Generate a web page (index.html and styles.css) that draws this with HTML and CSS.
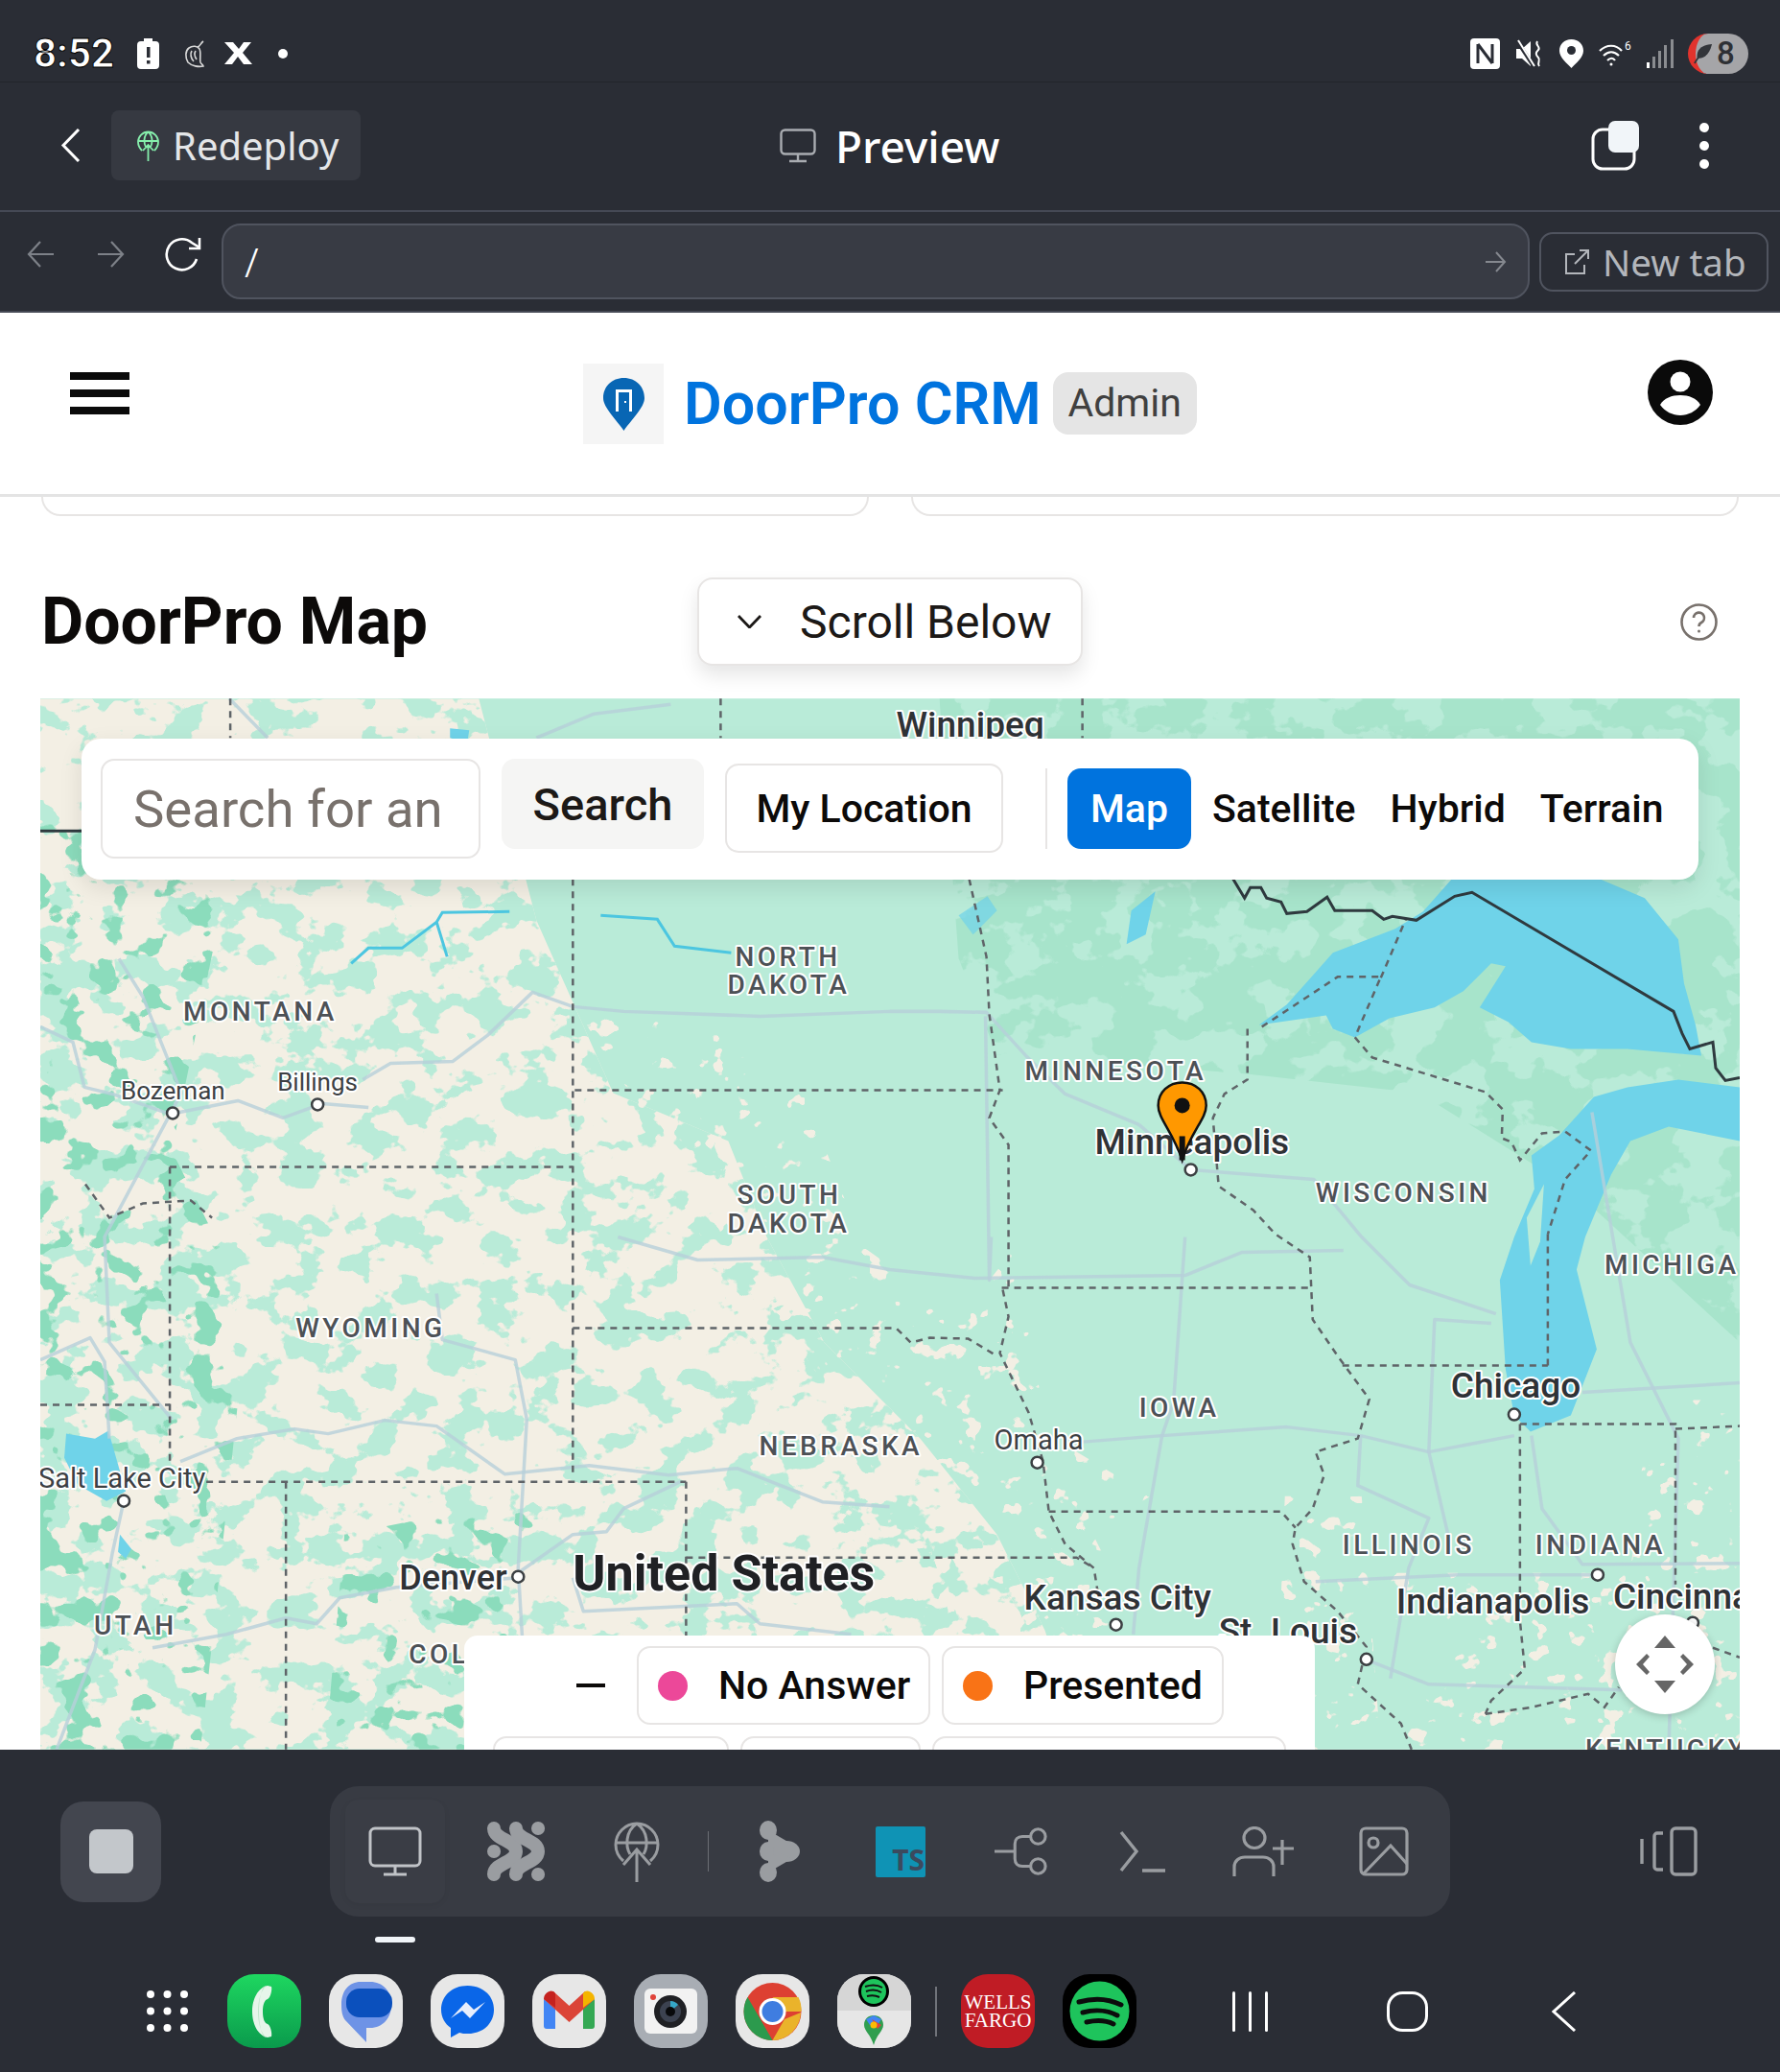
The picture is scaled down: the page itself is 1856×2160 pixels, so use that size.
FILE: index.html
```html
<!DOCTYPE html>
<html>
<head>
    <title>DoorPro CRM</title>
    <link rel="stylesheet" href="styles.css">
</head>
<body>
    <div class="status">
        <div class="status-left">
            <span class="clock">8:52</span>
            <svg class="ic-batt" viewBox="0 0 23 32"><path d="M7 0h9v3h3a4 4 0 0 1 4 4v21a4 4 0 0 1-4 4H4a4 4 0 0 1-4-4V7a4 4 0 0 1 4-4h3z" fill="#fff"/><rect x="10" y="9" width="3.5" height="11" fill="#2a2d35"/><rect x="10" y="23" width="3.5" height="3.5" fill="#2a2d35"/></svg>
            <svg class="ic-chili" viewBox="0 0 24 30" fill="none" stroke="#d8d8d8" stroke-width="1.6"><path d="M16 8c3-1 3-4 6-6M7 9c4-3 9-2 11 1 2 4 0 10 1 14 1 2 3 3 3 4-5 1-12 0-16-4C3 19 3 12 7 9z"/><path d="M10 12c-2 3-1 8 2 11M14 12c-2 3-1 6 1 9"/></svg>
            <svg class="ic-x" viewBox="0 0 31 23"><path d="M1 0h9l6 7 5-7h8l-9 11 10 12h-9l-6-8-6 8H1l10-12z" fill="#fff"/></svg>
            <span class="status-dot"></span>
        </div>
        <div class="status-right">
            <svg class="ic-nfc" viewBox="0 0 31 32"><rect width="31" height="32" rx="4" fill="#fff"/><path d="M8 6v20M23 6v20M8 6l15 20" fill="none" stroke="#2a2d35" stroke-width="3"/></svg>
            <svg class="ic-mute" viewBox="0 0 30 30"><path d="M1 10h6l9-8v26l-9-8H1z" fill="#fff"/><path d="M2 2l17 26" stroke="#2a2d35" stroke-width="4"/><path d="M3 1l17 27" stroke="#fff" stroke-width="2"/><path d="M23 2c-3 4 4 6 1 9s-3 5 0 8-2 5 1 9" fill="none" stroke="#fff" stroke-width="2"/></svg>
            <svg class="ic-loc" viewBox="0 0 25 30"><path d="M12.500 0C5 0 0 5 0 12c0 7 8 13 12.500 18C17 25 25 19 25 12 25 5 20 0 12.500 0z" fill="#fff"/><circle cx="12.500" cy="11.500" r="4.500" fill="#2a2d35"/></svg>
            <svg class="ic-wifi" viewBox="0 0 34 26" fill="none" stroke="#fff" stroke-width="2.200"><path d="M1 10c7-7 17-7 23 0M5 15c5-5 11-5 16 0M9 20c3-3 6-3 8 0"/><circle cx="13" cy="24" r="1.500" fill="#fff" stroke="none"/><text class="wifi-six" x="27" y="9">6</text></svg>
            <svg class="ic-signal" viewBox="0 0 28 30" fill="#8a8c90"><rect x="0" y="24" width="3" height="6" fill="#fff"/><rect x="6" y="18" width="3" height="12"/><rect x="12" y="12" width="3" height="18"/><rect x="18" y="6" width="3" height="24"/><rect x="25" y="0" width="3" height="30"/></svg>
            <div class="batt-pill"><svg class="leaf" viewBox="0 0 22 24"><path d="M21 1C9 2 3 7 4 17c8 1 14-4 17-16z" fill="#33353a"/><path d="M1 23c3-6 6-9 11-13" stroke="#33353a" stroke-width="2" fill="none"/></svg><span>8</span></div>
        </div>
    </div>

    <div class="toolbar">
        <svg class="ic-back" viewBox="0 0 21 35" fill="none" stroke="#fff" stroke-width="3"><path d="M19 1L3 17.500 19 34"/></svg>
        <div class="redeploy">
            <svg class="ic-deploy" viewBox="0 0 23 32" fill="none" stroke="#86efac" stroke-width="1.800"><path d="M5 21C2 18 1 15 1 12a10.500 10.500 0 0 1 21 0c0 3-1 6-4 9M1 11h21M11.500 1.500c-5 4-5 12-2 17M11.500 1.500c5 4 5 12 2 17M11.500 32V15M6 21l5.500-6 5.500 6"/></svg>
            <span>Redeploy</span>
        </div>
        <div class="preview-title">
            <svg class="ic-monitor" viewBox="0 0 38 36" fill="none" stroke="#a9acb1" stroke-width="2.400"><rect x="1.500" y="1.500" width="35" height="25" rx="4"/><path d="M19 27v7M10 34h18"/></svg>
            <span>Preview</span>
        </div>
        <svg class="ic-copy" viewBox="0 0 50 52"><rect x="2" y="9" width="43" height="41" rx="10" fill="none" stroke="#fff" stroke-width="3"/><rect x="18" y="0" width="32" height="33" rx="7" fill="#f1f5f9"/></svg>
        <svg class="ic-dots" viewBox="0 0 10 48" fill="#fff"><circle cx="5" cy="5" r="5"/><circle cx="5" cy="24" r="5"/><circle cx="5" cy="43" r="5"/></svg>
    </div>

    <div class="urlbar">
        <svg class="ic-nav" viewBox="0 0 28 28" fill="none" stroke="#7d8188" stroke-width="2.200"><path d="M28 14H2M14 1L2 14l12 13"/></svg>
        <svg class="ic-nav ic-forward" viewBox="0 0 28 28" fill="none" stroke="#7d8188" stroke-width="2.200"><path d="M0 14h26M14 1l12 13-12 13"/></svg>
        <svg class="ic-reload" viewBox="0 0 38 36" fill="none" stroke="#fff" stroke-width="2.600"><path d="M33 23a16 16 0 1 1-5-17l8 5"/><path d="M36 1v11H25"/></svg>
        <div class="url-input">
            <span class="url-slash">/</span>
            <svg class="ic-go" viewBox="0 0 22 22" fill="none" stroke="#85888f" stroke-width="2"><path d="M0 11h20M11 1l9 10-9 10"/></svg>
        </div>
        <div class="new-tab">
            <svg class="ic-ext" viewBox="0 0 26 26" fill="none" stroke="#b3b6bb" stroke-width="2"><path d="M11 5H2v20h19v-9M11 15L25 1M16 1h9v9"/></svg>
            <span>New tab</span>
        </div>
    </div>

    <div class="app">
        <header class="app-header">
            <div class="burger"><i></i><i></i><i></i></div>
            <div class="brand">
                <div class="logo-box">
                    <svg class="logo-pin" viewBox="0 0 43 55"><path d="M21.500 0C9 0 0 9 0 21c0 10 15 24 21.500 34C28 45 43 31 43 21 43 9 34 0 21.500 0z" fill="#0866b4"/><path d="M13 35V12h17v23h-3V15H16v20z" fill="#fff"/><rect x="22" y="24" width="2" height="2" fill="#fff"/></svg>
                </div>
                <span class="brand-name">DoorPro CRM</span>
                <span class="badge">Admin</span>
            </div>
            <svg class="ic-user" viewBox="0 0 68 68"><circle cx="34" cy="34" r="34" fill="#0a0a0a"/><circle cx="34" cy="23" r="10.500" fill="#fff"/><path d="M13 47c4-7 12-10 21-10s17 3 21 10c-5 7-13 11-21 11s-16-4-21-11z" fill="#fff"/></svg>
        </header>

        <div class="stubs"><div class="stub"></div><div class="stub"></div></div>

        <div class="title-row">
            <h1>DoorPro Map</h1>
            <div class="scroll-btn">
                <svg class="ic-chev" viewBox="0 0 25 14" fill="none" stroke="#1c1917" stroke-width="2.800"><path d="M1 1l11.500 12L24 1"/></svg>
                <span>Scroll Below</span>
            </div>
            <svg class="ic-help" viewBox="0 0 39 39" fill="none" stroke="#78716c" stroke-width="2.600"><circle cx="19.500" cy="19.500" r="18"/><path d="M14 15a5.500 5.500 0 1 1 8 5c-2 1-2.500 2-2.500 4"/><circle cx="19.500" cy="29" r="1.500" fill="#78716c" stroke="none"/></svg>
        </div>

        <div class="map-wrap">
            <svg class="map" viewBox="43 729 1771 1095">
                <defs>
                    <filter id="patchMint" x="0" y="0" width="100%" height="100%" color-interpolation-filters="sRGB">
                        <feTurbulence type="fractalNoise" baseFrequency=".024 .03" numOctaves="4" seed="11"/>
                        <feColorMatrix values="0 0 0 0 .725  0 0 0 0 .922  0 0 0 0 .847  30 0 0 0 -16"/>
                    </filter>
                    <filter id="patchForest" x="0" y="0" width="100%" height="100%" color-interpolation-filters="sRGB">
                        <feTurbulence type="fractalNoise" baseFrequency=".02 .025" numOctaves="4" seed="4"/>
                        <feColorMatrix values="0 0 0 0 .655  0 0 0 0 .894  0 0 0 0 .796  30 0 0 0 -13.500"/>
                    </filter>
                    <filter id="patchDeep" x="0" y="0" width="100%" height="100%" color-interpolation-filters="sRGB">
                        <feTurbulence type="fractalNoise" baseFrequency=".03 .036" numOctaves="3" seed="23"/>
                        <feColorMatrix values="0 0 0 0 .545  0 0 0 0 .863  0 0 0 0 .737  30 0 0 0 -18"/>
                    </filter>
                    <filter id="patchCream" x="0" y="0" width="100%" height="100%" color-interpolation-filters="sRGB">
                        <feTurbulence type="fractalNoise" baseFrequency=".042 .05" numOctaves="3" seed="9"/>
                        <feColorMatrix values="0 0 0 0 .953  0 0 0 0 .937  0 0 0 0 .894  30 0 0 0 -19.500"/>
                    </filter>
                    <clipPath id="westLand"><path d="M43 729H500L560 960 600 1050 640 1140 760 1190 800 1290 860 1400 960 1500 1040 1600 1090 1700 1130 1824H43z"/></clipPath>
                    <clipPath id="mixLand"><path d="M600 1050L820 1090 900 1300 1040 1400 1160 1640 1180 1824H1000L900 1500 760 1300z"/><path d="M1340 1560H1420L1440 1824H1330z"/><path d="M1450 1640H1700L1814 1660V1824H1470z"/><path d="M1060 1300L1100 1500 1200 1560 1100 1620 980 1400z"/><path d="M1720 1460H1814V1640H1700z"/></clipPath>
                    <clipPath id="northLand"><path d="M980 729H1814V1400L1640 1240 1480 1140 1300 1120 1040 1100 1000 1000z"/></clipPath>
                    <clipPath id="rockies"><path d="M43 860H250L180 1200 260 1360 210 1824H43z"/><path d="M360 1600L560 1560 540 1824H340z"/></clipPath>
                </defs>

                <rect x="43" y="729" width="1771" height="1095" fill="#b9ebd8"/>
                <rect x="43" y="729" width="1771" height="1095" fill="#f3efe4" clip-path="url(#westLand)"/>
                <g clip-path="url(#westLand)"><rect x="43" y="729" width="1771" height="1095" filter="url(#patchMint)"/></g>
                <g clip-path="url(#rockies)"><rect x="43" y="729" width="1771" height="1095" filter="url(#patchDeep)"/></g>
                <g clip-path="url(#mixLand)"><rect x="43" y="729" width="1771" height="1095" filter="url(#patchCream)"/></g>
                <g clip-path="url(#northLand)"><rect x="43" y="729" width="1771" height="1095" filter="url(#patchForest)"/></g>

                <g fill="#6fd3e9">
                    <path d="M1313 1069L1342 1048 1390 994 1455 969 1484 951 1514 917H1668L1715 937 1750 980 1756 1026 1768 1069 1774 1101 1697 1094 1638 1094 1597 1087 1573 1066 1543 1051 1570 1008 1555 1005 1526 1034 1496 1051 1449 1062 1413 1082 1390 1073 1383 1059z"/>
                    <path d="M1579 1290L1564 1335 1570 1428 1579 1476 1596 1493 1638 1476 1665 1407 1644 1324 1653 1290 1680 1225 1700 1190 1740 1175 1814 1190V1134L1750 1126 1697 1134 1662 1144 1626 1184 1597 1205 1600 1240z"/>
                    <path d="M1610 1235L1592 1270 1596 1320 1606 1295z" fill="#b9ebd8"/>
                    <path d="M100 1500L114 1492 132 1555 112 1565 82 1548 68 1520 70 1495z"/>
                    <path d="M126 1600L138 1615 132 1625 124 1618z"/>
                    <path d="M1000 955L1030 935 1040 950 1015 975z" opacity=".7"/>
                    <path d="M1180 950L1205 930 1195 975 1175 985z"/>
                    <path d="M470 760L490 762 488 775 470 770z"/>
                </g>

                <g fill="none" stroke="#4cc6e0" stroke-width="3">
                    <path d="M367 1005L385 989 420 989 456 962 467 998M456 962L462 952 532 951"/>
                    <path d="M627 955L686 959 704 987 763 994"/>
                </g>

                <g class="roads">
                    <path d="M43 1071L77 1087 89 1134 118 1141 178 1162 249 1148 296 1166 337 1151 385 1155"/>
                    <path d="M379 1126L408 1109 473 1107 509 1080 556 1035 598 1050 651 1055 793 1060 928 1055 981 1055 1029 1056 1070 1101 1111 1141 1188 1173"/>
                    <path d="M189 1524L248 1500 308 1490 343 1495 402 1481 456 1487 527 1537 615 1528 698 1538 769 1531 858 1566 928 1571"/>
                    <path d="M645 1290L728 1314 858 1311 928 1324 1017 1333 1236 1330 1295 1306 1401 1304"/>
                    <path d="M1123 1504L1212 1497 1342 1488 1419 1497 1490 1514 1579 1497"/>
                    <path d="M456 1349L462 1397 538 1418 550 1480 541 1635 546 1720"/>
                    <path d="M538 1642L598 1600 633 1597 651 1573 710 1545"/>
                    <path d="M598 1645L609 1680 769 1672 793 1693 888 1704"/>
                    <path d="M160 1718L237 1704 299 1687 331 1693 355 1666 414 1655 541 1645"/>
                    <path d="M1236 1290L1224 1462 1212 1497 1188 1635 1182 1704"/>
                    <path d="M1034 1290L1032 1335 1028 1060"/>
                    <path d="M1419 1497L1416 1549 1490 1583 1469 1635 1450 1750"/>
                    <path d="M1555 1380L1496 1376 1490 1514 1510 1600"/>
                    <path d="M1650 1452L1814 1442"/>
                    <path d="M1597 1497L1608 1573 1650 1631 1814 1630"/>
                    <path d="M1372 1649L1520 1642 1666 1642"/>
                    <path d="M1419 1728L1490 1756 1691 1762"/>
                    <path d="M1188 1173L1242 1220 1370 1230 1420 1290 1470 1340 1560 1370"/>
                    <path d="M130 1565L118 1620 100 1720 60 1824"/>
                    <path d="M125 1000L150 1040 190 1140 110 1290 115 1400 180 1480"/>
                    <path d="M43 1418L95 1395 110 1420 115 1500"/>
                    <path d="M1660 1160L1700 1400 1750 1500 1740 1824"/>
                    <path d="M240 729L280 770M560 770L620 745 700 735"/>
                </g>

                <g class="dashes">
                    <path d="M598 917V1535"/>
                    <path d="M241 729V770M752 729V770M1129 729V770"/>
                    <path d="M178 1217H598"/>
                    <path d="M178 1217V1524"/>
                    <path d="M600 1137H1046"/>
                    <path d="M598 1385H935L950 1400 970 1395 1010 1396 1040 1414"/>
                    <path d="M43 1465H178"/>
                    <path d="M216 1545H716"/>
                    <path d="M299 1545V1824"/>
                    <path d="M716 1545V1710"/>
                    <path d="M716 1624H1123L1141 1635"/>
                    <path d="M1011 917L1029 998 1032 1058 1043 1137 1032 1166 1052 1194V1343"/>
                    <path d="M1045 1343H1366"/>
                    <path d="M1301 1073V1126L1277 1141 1265 1166 1271 1237 1307 1262 1330 1287 1366 1311 1369 1376 1395 1414 1428 1459 1416 1500 1372 1514 1381 1538 1369 1573 1351 1593 1348 1610 1360 1649 1395 1680 1425 1717 1416 1756 1461 1797 1472 1824"/>
                    <path d="M1094 1576H1336L1351 1593"/>
                    <path d="M1046 1345L1052 1373 1043 1411 1073 1473 1088 1524 1094 1576 1111 1610 1141 1635 1145 1660"/>
                    <path d="M1400 1424H1614"/>
                    <path d="M1614 1287V1424"/>
                    <path d="M1585 1485V1690L1590 1740 1555 1773 1549 1787"/>
                    <path d="M1585 1485H1747V1652"/>
                    <path d="M1747 1490L1814 1487"/>
                    <path d="M1549 1787L1597 1780 1656 1766 1673 1780 1688 1759"/>
                    <path d="M1786 1718L1814 1728"/>
                    <path d="M1413 1082L1431 1103 1549 1139 1567 1157 1566 1187 1576 1191 1585 1210 1608 1182 1632 1180 1659 1200 1632 1230 1614 1287"/>
                    <path d="M1316 1071L1395 1019H1440L1413 1082M1440 1020L1466 959"/>
                    <path d="M90 1235L115 1270 150 1255 200 1252 222 1270"/>
                </g>

                <path class="border" d="M1286 917L1298 937 1304 926H1315L1321 937 1336 941 1342 953 1363 951 1384 936 1392 950H1431L1443 959 1452 956 1477 960 1517 935 1535 931 1745 1055 1754 1078 1762 1094 1786 1087 1789 1114 1799 1127 1814 1124"/>
                <path class="border" d="M43 867H90"/>

                <g class="places">
                    <circle cx="181" cy="1161" r="6"/><circle cx="332" cy="1152" r="6"/><circle cx="1242" cy="1220" r="6"/><circle cx="1082" cy="1525" r="6"/><circle cx="1579" cy="1475" r="6"/><circle cx="130" cy="1565" r="6"/><circle cx="541" cy="1644" r="6"/><circle cx="1164" cy="1694" r="6"/><circle cx="1425" cy="1730" r="6"/><circle cx="1666" cy="1642" r="6"/><circle cx="1765" cy="1692" r="6"/>
                </g>

                <g class="state">
                    <text x="192" y="1065">MONTANA</text>
                    <text x="767" y="1008">NORTH</text>
                    <text x="759" y="1037">DAKOTA</text>
                    <text x="769" y="1256">SOUTH</text>
                    <text x="759" y="1286">DAKOTA</text>
                    <text x="1069" y="1127">MINNESOTA</text>
                    <text x="1372" y="1254">WISCONSIN</text>
                    <text x="1673" y="1328">MICHIGA</text>
                    <text x="309" y="1394">WYOMING</text>
                    <text x="792" y="1517">NEBRASKA</text>
                    <text x="1188" y="1477">IOWA</text>
                    <text x="99" y="1704">UTAH</text>
                    <text x="427" y="1734">COL</text>
                    <text x="1400" y="1620">ILLINOIS</text>
                    <text x="1601" y="1620">INDIANA</text>
                    <text x="1653" y="1833">KENTUCKY</text>
                </g>
                <g class="city-sm">
                    <text x="127" y="1147">Bozeman</text>
                    <text x="290" y="1138">Billings</text>
                    <text x="1037" y="1511" class="wide">Omaha</text>
                    <text x="41" y="1551" class="wide">Salt Lake City</text>
                </g>
                <g class="city-lg">
                    <text x="935" y="769">Winnipeg</text>
                    <text x="417" y="1657" class="denver">Denver</text>
                    <text x="1142" y="1204">Minneapolis</text>
                    <text x="1513" y="1457">Chicago</text>
                    <text x="1068" y="1678">Kansas City</text>
                    <text x="1271" y="1713">St. Louis</text>
                    <text x="1456" y="1682">Indianapolis</text>
                    <text x="1682" y="1677">Cincinnati</text>
                </g>
                <text class="country" x="598" y="1658">United States</text>

                <path d="M1233 1129c-14 0-25 10-25 24 0 14 15 27 25 57 9-30 25-43 25-57 0-14-11-24-25-24z" fill="#ff9800" stroke="#111" stroke-width="2.500"/>
                <path d="M1233 1185v25" stroke="#111" stroke-width="6"/>
                <circle cx="1233" cy="1153" r="8" fill="#111"/>
            </svg>

            <div class="map-controls">
                <div class="search-input">Search for an</div>
                <div class="search-btn">Search</div>
                <div class="loc-btn">My Location</div>
                <div class="ctl-divider"></div>
                <div class="type-btn active">Map</div>
                <div class="type-btn">Satellite</div>
                <div class="type-btn">Hybrid</div>
                <div class="type-btn">Terrain</div>
            </div>

            <div class="legend">
                <div class="legend-dash"><i></i></div>
                <div class="pill"><b class="dot pink"></b>No Answer</div>
                <div class="pill"><b class="dot orange"></b>Presented</div>
                <div class="pill w1"></div>
                <div class="pill w2"></div>
                <div class="pill w3"></div>
            </div>

            <div class="pan-ctl">
                <svg viewBox="0 0 60 60" fill="#666"><path d="M30 0l11 13H19zM30 60L19 47h22zM0 30l11-11 3 3-7 8 7 8-3 3zM60 30L49 41l-3-3 7-8-7-8 3-3z"/></svg>
            </div>
        </div>
    </div>

    <div class="bottom">
        <div class="bottom-top">
            <div class="stop-btn"><i></i></div>
            <div class="tools">
                <div class="tool active">
                    <svg viewBox="0 0 56 52" fill="none" stroke="#c0c3c7" stroke-width="3"><rect x="2" y="2" width="52" height="39" rx="5"/><path d="M28 41v9M16 50h24"/></svg>
                </div>
                <div class="tool">
                    <svg viewBox="0 0 62 64" fill="none" stroke="#9a9da1" stroke-width="14" stroke-linecap="round"><path d="M8 8c0 12 23 12 23 24S8 44 8 56"/><path d="M31 8c0 12 23 12 23 24s-23 12-23 24"/><path d="M54 8h.1M54 56h.1M8 32h.1"/></svg>
                </div>
                <div class="tool">
                    <svg viewBox="0 0 48 64" fill="none" stroke="#9a9da1" stroke-width="3"><path d="M10 42C4 37 2 31 2 25a22 22 0 0 1 44 0c0 6-2 12-8 17M2 23h44M24 3c-12 8-12 24-7 32M24 3c12 8 12 24 7 32M24 64V30M10 46l14-16 14 16"/></svg>
                </div>
                <div class="tools-sep"></div>
                <div class="tool">
                    <svg viewBox="0 0 42 64" fill="#9a9da1"><ellipse cx="9" cy="10" rx="9" ry="10"/><ellipse cx="9" cy="32" rx="9" ry="10"/><ellipse cx="9" cy="54" rx="9" ry="10"/><ellipse cx="28" cy="32" rx="14" ry="11"/><path d="M9 10l24 14-10 6-14-4zM9 54l24-14-10-6-14 4z"/></svg>
                </div>
                <div class="tool">
                    <div class="ts-tile"><span>TS</span></div>
                </div>
                <div class="tool">
                    <svg viewBox="0 0 58 52" fill="none" stroke="#9a9da1" stroke-width="3.200"><circle cx="47" cy="10" r="8"/><circle cx="47" cy="42" r="8"/><path d="M0 26h22M39 10h-9c-5 0-8 3-8 8v16c0 5 3 8 8 8h9"/></svg>
                </div>
                <div class="tool">
                    <svg viewBox="0 0 48 44" fill="none" stroke="#9a9da1" stroke-width="3.400"><path d="M2 2l16 20L2 42M24 42h24"/></svg>
                </div>
                <div class="tool">
                    <svg viewBox="0 0 64 52" fill="none" stroke="#9a9da1" stroke-width="3.200"><ellipse cx="23" cy="12" rx="11" ry="10.500"/><path d="M2 52V42c0-6 5-10 11-10h19c6 0 11 4 11 10v10M52 14v26M42 23h22" /></svg>
                </div>
                <div class="tool">
                    <svg viewBox="0 0 52 52" fill="none" stroke="#9a9da1" stroke-width="3.200"><rect x="2" y="2" width="48" height="48" rx="5"/><circle cx="15" cy="17" r="5"/><path d="M4 50l29-30 17 19"/></svg>
                </div>
            </div>
            <svg class="ic-panel" viewBox="0 0 60 52" fill="none" stroke="#9a9da1" stroke-width="3.400"><rect x="33" y="2" width="25" height="48" rx="4"/><path d="M24 7h-6a3 3 0 0 0-3 3v32a3 3 0 0 0 3 3h6M2 13v26"/></svg>
        </div>
        <div class="indicator-row"><i></i></div>
        <div class="dock">
            <svg class="ic-grid" viewBox="0 0 43 43" fill="#fff"><circle cx="4" cy="4" r="4"/><circle cx="21.500" cy="4" r="4"/><circle cx="39" cy="4" r="4"/><circle cx="4" cy="21.500" r="4"/><circle cx="21.500" cy="21.500" r="4"/><circle cx="39" cy="21.500" r="4"/><circle cx="4" cy="39" r="4"/><circle cx="21.500" cy="39" r="4"/><circle cx="39" cy="39" r="4"/></svg>

            <div class="app-icon phone"><svg viewBox="0 0 77 77"><path d="M42 12c-10 2-16 14-16 27s6 25 16 27l4-1c1-3-1-12-4-13-3-1-5-5-5-13s2-12 5-13c3-1 5-10 4-13z" fill="#e6f5ea"/><path d="M38 13c-3 5-5 15-5 26s2 21 5 26l3 1c-6-4-9-15-9-27s3-22 9-27z" fill="#bfe6cb"/></svg></div>
            <div class="app-icon light"><svg viewBox="0 0 77 77"><path d="M13 32c0-15 8-24 20-24h10c13 0 22 9 22 24 0 14-9 24-22 24h-4v15L17 48c-3-4-4-9-4-16z" fill="#6e93e6"/><rect x="18" y="15" width="48" height="30" rx="14" fill="#0b50bd"/></svg></div>
            <div class="app-icon light"><svg viewBox="0 0 77 77"><path d="M38.500 12C22 12 11 23 11 37c0 8 4 15 10 19v10l9-5c3 1 5 1 8.500 1C55 62 66 51 66 37S55 12 38.500 12z" fill="#0a66e8"/><path d="M21 46l16-17 8 8 12-8-16 17-8-8z" fill="#e8eefc"/></svg></div>
            <div class="app-icon light"><svg viewBox="0 0 77 77"><path d="M12 26v28a3 3 0 0 0 3 3h9V35z" fill="#4285f4"/><path d="M65 26v28a3 3 0 0 1-3 3h-9V35z" fill="#34a853"/><path d="M12 26l26.500 24L65 26 55 18 38.500 33 22 18z" fill="#db4437"/><path d="M12 26c0-6 6-10 10-8l2 2v15z" fill="#c5221f"/><path d="M65 26c0-6-6-10-10-8l-2 2v15z" fill="#f4b400"/></svg></div>
            <div class="app-icon cam"><svg viewBox="0 0 77 77"><rect x="11" y="15" width="55" height="47" rx="6" fill="#f2f2f2"/><circle cx="20" cy="24" r="3" fill="#e0433a"/><circle cx="38" cy="39" r="17" fill="#1f2024"/><circle cx="38" cy="39" r="11" fill="#3c4250"/><path d="M38 28a11 11 0 0 1 8 4l-8 7z" fill="#35a7c8"/><circle cx="38" cy="39" r="5" fill="#08090b"/></svg></div>
            <div class="app-icon light"><svg viewBox="0 0 77 77"><circle cx="38.500" cy="39" r="30" fill="#dd4032"/><path d="M38.500 69a30 30 0 0 1-26-45l26 45z" fill="#2c9a4d"/><path d="M38.500 69L51 47l17-7a30 30 0 0 1-29.500 29z" fill="#eab32b"/><path d="M38.500 24h27a30 30 0 0 1 3 15H51z" fill="#eab32b"/><circle cx="38.500" cy="39" r="14" fill="#fff"/><circle cx="38.500" cy="39" r="11" fill="#3f7de0"/></svg></div>
            <div class="app-icon folder"><svg viewBox="0 0 77 77"><rect y="0" width="77" height="38" fill="#d6d6d6"/><rect y="38" width="77" height="39" fill="#e6e6e6"/><circle cx="38" cy="18" r="16" fill="#000"/><circle cx="38" cy="18" r="13" fill="#1ec45c"/><path d="M29 13c6-2 13-2 18 1M30 18c5-2 11-2 16 1M31 23c4-1 9-1 13 1" fill="none" stroke="#111" stroke-width="2"/><path d="M38 43c-6 0-10 4-10 10 0 6 7 10 10 21 3-11 10-15 10-21 0-6-4-10-10-10z" fill="#2f9e4f"/><path d="M30 47l8-4 8 4-4 6h-8z" fill="#4285f4"/><path d="M36 47l10 6-4 4z" fill="#e0433a"/><circle cx="38" cy="53" r="3.500" fill="#fbbc04"/></svg></div>
            <div class="dock-sep"></div>
            <div class="app-icon wells"><span>WELLS</span><span>FARGO</span></div>
            <div class="app-icon spot"><svg viewBox="0 0 77 77"><circle cx="38.500" cy="38.500" r="31" fill="#1ec45c"/><path d="M17 29c14-4 30-4 44 3M21 40c11-3 25-3 36 3M25 50c9-2 20-2 28 2" fill="none" stroke="#0c0c0c" stroke-width="5" stroke-linecap="round"/></svg></div>
            <div class="navs">
                <svg class="nav-recents" viewBox="0 0 37 42" fill="#fff"><rect width="3" height="42" rx="1.500"/><rect x="17" width="3" height="42" rx="1.500"/><rect x="34" width="3" height="42" rx="1.500"/></svg>
                <svg class="nav-home" viewBox="0 0 43 42" fill="none" stroke="#fff" stroke-width="3"><rect x="1.500" y="1.500" width="40" height="39" rx="15"/></svg>
                <svg class="nav-back" viewBox="0 0 26 42" fill="none" stroke="#fff" stroke-width="3"><path d="M24 1L2 21l22 20"/></svg>
            </div>
        </div>
    </div>
</body>
</html>
```

FILE: styles.css
```css
* {
    margin: 0;
    padding: 0;
    box-sizing: border-box;
}

body {
    width: 1856px;
    height: 2160px;
    overflow: hidden;
    display: flex;
    flex-direction: column;
    background: #2a2d35;
    font-family: Roboto, "Liberation Sans", sans-serif;
}

svg {
    display: block;
    flex: none;
}

/* phone status bar */
.status {
    height: 86px;
    border-bottom: 1px solid #22252b;
    display: flex;
    justify-content: space-between;
    align-items: center;
    padding: 26px 33px 0 35px;
}

.status-left,
.status-right {
    display: flex;
    align-items: center;
}

.clock {
    width: 82px;
    white-space: nowrap;
    color: #fff;
    font-size: 42px;
    font-weight: 700;
    -webkit-text-stroke: 1px #000;
    margin-right: 26px;
}

.ic-batt { width: 23px; height: 32px; margin-right: 24px; }
.ic-chili { width: 24px; height: 30px; margin-right: 19px; }
.ic-x { width: 31px; height: 23px; margin-right: 26px; }

.status-dot {
    width: 10px;
    height: 10px;
    border-radius: 50%;
    background: #fff;
}

.ic-nfc { width: 31px; height: 32px; margin-right: 16px; }
.ic-mute { width: 30px; height: 30px; margin-right: 16px; }
.ic-loc { width: 25px; height: 30px; margin-right: 16px; }
.ic-wifi { width: 34px; height: 26px; margin-right: 16px; }
.ic-signal { width: 28px; height: 30px; margin-right: 15px; }

.wifi-six {
    fill: #fff;
    stroke: none;
    font-size: 12px;
    font-family: Roboto, sans-serif;
}

.batt-pill {
    width: 63px;
    height: 42px;
    border-radius: 21px;
    background: #a5a5a8;
    border-left: 8px solid #e2332d;
    display: flex;
    align-items: center;
    color: #2e3035;
    font-size: 33px;
    font-weight: 500;
}

.leaf {
    width: 20px;
    height: 24px;
    margin-left: -2px;
    margin-right: 4px;
}

/* replit toolbar */
.toolbar {
    height: 135px;
    border-bottom: 2px solid #454955;
    display: flex;
    align-items: center;
    padding-left: 63px;
    padding-bottom: 2px;
}

.ic-back { width: 21px; height: 35px; margin-right: 32px; }

.redeploy {
    width: 260px;
    height: 73px;
    background: #363941;
    border-radius: 8px;
    display: flex;
    align-items: center;
    padding-left: 27px;
    gap: 14px;
    color: #e4e6e8;
    font-family: "Noto Sans", sans-serif;
    font-size: 40px;
    flex: none;
}

.ic-deploy { width: 23px; height: 32px; }

.preview-title {
    display: flex;
    align-items: center;
    gap: 20px;
    margin-left: 437px;
    color: #fff;
    font-family: "Noto Sans", sans-serif;
    font-size: 46px;
    font-weight: 500;
}

.ic-monitor { width: 38px; height: 36px; }
.ic-copy { width: 50px; height: 52px; margin-left: auto; margin-right: 63px; }
.ic-dots { width: 10px; height: 48px; margin-right: 74px; }

.urlbar {
    height: 105px;
    border-bottom: 2px solid #454955;
    display: flex;
    align-items: center;
    padding-left: 28px;
}

.ic-nav { width: 28px; height: 28px; margin-top: -16px; margin-right: 46px; }
.ic-forward { margin-right: 42px; }
.ic-reload { width: 38px; height: 36px; margin-top: -16px; margin-right: 21px; }

.url-input {
    width: 1364px;
    height: 79px;
    flex: none;
    background: #383b44;
    border: 2px solid #50545f;
    border-radius: 20px;
    display: flex;
    align-items: center;
    justify-content: space-between;
    padding: 0 22px 0 22px;
}

.url-slash {
    color: #fff;
    font-family: "Noto Sans", sans-serif;
    font-size: 42px;
    font-weight: 300;
}

.ic-go { width: 22px; height: 22px; }

.new-tab {
    width: 239px;
    height: 62px;
    flex: none;
    margin-left: 10px;
    border: 2px solid #50545f;
    border-radius: 14px;
    display: flex;
    align-items: center;
    gap: 14px;
    padding-left: 24px;
    color: #b3b6bb;
    font-family: "Noto Sans", sans-serif;
    font-size: 38.500px;
}

.ic-ext { width: 26px; height: 26px; }

/* the crm page */
.app {
    height: 1498px;
    background: #fff;
    overflow: hidden;
    display: flex;
    flex-direction: column;
}

.app-header {
    height: 192px;
    flex: none;
    display: flex;
    align-items: flex-start;
    border-bottom: 3px solid #e4e4e4;
    padding-left: 73px;
    position: relative;
    z-index: 2;
    background: #fff;
}

.burger {
    width: 62px;
    margin-top: 62px;
    display: flex;
    flex-direction: column;
    gap: 10px;
}

.burger i {
    display: block;
    height: 8px;
    background: #0a0a0a;
}

.brand {
    display: flex;
    align-items: center;
    margin-left: 473px;
    margin-top: 53px;
}

.logo-box {
    width: 84px;
    height: 84px;
    background: #f5f5f5;
    display: flex;
    align-items: center;
    justify-content: center;
    margin-right: 21px;
}

.logo-pin { width: 43px; height: 55px; }

.brand-name {
    font-size: 61px;
    font-weight: 600;
    color: #0073de;
    margin-right: 12px;
    white-space: nowrap;
}

.badge {
    width: 150px;
    height: 65px;
    background: #e5e5e5;
    border-radius: 16px;
    color: #404040;
    font-size: 41px;
    display: flex;
    align-items: center;
    justify-content: center;
    margin-top: -2px;
}

.ic-user {
    width: 68px;
    height: 68px;
    margin-left: auto;
    margin-top: 49px;
    margin-right: 70px;
}

.stubs {
    display: grid;
    grid-template-columns: 863px 863px;
    gap: 44px;
    padding-left: 43px;
    height: 20px;
    flex: none;
}

.stub {
    border: 2px solid #e7e5e4;
    border-top: 0;
    border-radius: 0 0 20px 20px;
}

.title-row {
    margin-top: 64px;
    height: 92px;
    margin-bottom: 34px;
    flex: none;
    display: flex;
    align-items: center;
    padding-left: 43px;
}

h1 {
    width: 684px;
    font-size: 68px;
    font-weight: 700;
    color: #0c0a09;
    white-space: nowrap;
}

.scroll-btn {
    width: 402px;
    height: 92px;
    flex: none;
    background: #fff;
    border: 2px solid #e7e5e4;
    border-radius: 16px;
    box-shadow: 0 10px 20px rgba(0, 0, 0, .1);
    display: flex;
    align-items: center;
    padding-left: 40px;
    gap: 40px;
    color: #1c1917;
    font-size: 48px;
    position: relative;
    z-index: 1;
}

.ic-chev { width: 25px; height: 14px; }
.ic-help { width: 39px; height: 39px; margin-left: 623px; }

.map-wrap {
    width: 1772px;
    height: 1096px;
    margin-left: 42px;
    position: relative;
    overflow: hidden;
    flex: none;
}

.map { width: 1772px; height: 1096px; }

.roads path {
    fill: none;
    stroke: #b7cfda;
    stroke-width: 3.500;
    stroke-linejoin: round;
    opacity: .8;
}

.dashes path {
    fill: none;
    stroke: #5f6468;
    stroke-width: 2.500;
    stroke-dasharray: 7 6;
}

.border {
    fill: none;
    stroke: #2f3a3f;
    stroke-width: 3;
}

.places circle {
    fill: #fff;
    stroke: #3c4043;
    stroke-width: 2.500;
}

.map text {
    paint-order: stroke;
    stroke: #fff;
    stroke-width: 4px;
    stroke-linejoin: round;
    font-family: Roboto, sans-serif;
}

.state text {
    fill: #4d5156;
    font-size: 28px;
    font-weight: 500;
    letter-spacing: 3.500px;
}

.city-sm text {
    fill: #3c4043;
    font-size: 26px;
}

.city-sm .wide { font-size: 29px; }

.city-lg text {
    fill: #2f3236;
    font-size: 37px;
    font-weight: 500;
}

.city-lg .denver { font-size: 36px; }

.map .country {
    fill: #202124;
    font-size: 52px;
    font-weight: 700;
}

.map-controls {
    position: absolute;
    left: 43px;
    top: 42px;
    width: 1686px;
    height: 147px;
    background: #fff;
    border-radius: 20px;
    box-shadow: 0 8px 24px rgba(0, 0, 0, .1);
    display: flex;
    align-items: flex-start;
    padding: 21px 20px;
}

.map-controls > div { flex: none; }

.search-input {
    width: 396px;
    height: 104px;
    border: 2px solid #e7e5e4;
    border-radius: 14px;
    display: flex;
    align-items: center;
    padding-left: 32px;
    color: #78716c;
    font-size: 54.500px;
    margin-right: 22px;
}

.search-btn {
    width: 211px;
    height: 94px;
    background: #f5f5f4;
    border-radius: 14px;
    display: flex;
    align-items: center;
    justify-content: center;
    color: #1c1917;
    font-size: 47px;
    font-weight: 500;
    margin-right: 22px;
}

.loc-btn {
    width: 290px;
    height: 93px;
    margin-top: 5px;
    border: 2px solid #e7e5e4;
    border-radius: 14px;
    display: flex;
    align-items: center;
    justify-content: center;
    color: #0c0a09;
    font-size: 41px;
    font-weight: 500;
    margin-right: 44px;
}

.ctl-divider {
    width: 2px;
    height: 84px;
    margin-top: 10px;
    background: #e7e5e4;
    margin-right: 21px;
}

.type-btn {
    height: 84px;
    margin-top: 10px;
    padding: 0 18px;
    border-radius: 14px;
    display: flex;
    align-items: center;
    color: #0c0a09;
    font-size: 41px;
    font-weight: 500;
}

.type-btn.active {
    width: 129px;
    justify-content: center;
    background: #0073de;
    color: #fff;
    margin-right: 4px;
}

.legend {
    position: absolute;
    left: 442px;
    bottom: 0;
    width: 887px;
    height: 119px;
    background: #fff;
    overflow: hidden;
    border-radius: 14px 14px 0 0;
    display: flex;
    flex-wrap: wrap;
    justify-content: center;
    align-content: flex-start;
    gap: 12px;
    padding-top: 11px;
}

.legend-dash {
    width: 73px;
    height: 82px;
    display: flex;
    align-items: center;
    justify-content: center;
}

.legend-dash i {
    width: 30px;
    height: 4px;
    background: #0c0a09;
}

.pill {
    height: 82px;
    border: 2px solid #e7e5e4;
    border-radius: 14px;
    display: flex;
    align-items: center;
    padding-left: 20px;
    gap: 32px;
    color: #0c0a09;
    font-size: 41px;
    font-weight: 500;
    width: 306px;
}

.pill + .pill { width: 294px; }
.pill.w1 { width: 246px; }
.pill.w2 { width: 188px; }
.pill.w3 { width: 369px; }

.dot {
    width: 31px;
    height: 31px;
    border-radius: 50%;
}

.pink { background: #ec4899; }
.orange { background: #f97316; }

.pan-ctl {
    position: absolute;
    left: 1642px;
    top: 955px;
    width: 104px;
    height: 104px;
    border-radius: 50%;
    background: #fff;
    box-shadow: 0 2px 8px rgba(0, 0, 0, .2);
    display: flex;
    align-items: center;
    justify-content: center;
}

.pan-ctl svg { width: 60px; height: 60px; }

/* bottom tool tray */
.bottom {
    flex: 1;
    background: #2a2d35;
}

.bottom-top {
    display: flex;
    align-items: center;
    padding-top: 38px;
    padding-left: 63px;
}

.stop-btn {
    width: 105px;
    height: 105px;
    background: #43464f;
    border-radius: 24px;
    display: flex;
    align-items: center;
    justify-content: center;
    margin-right: 176px;
}

.stop-btn i {
    width: 46px;
    height: 46px;
    background: #c3c7cb;
    border-radius: 8px;
}

.tools {
    width: 1168px;
    height: 136px;
    background: #383b43;
    border-radius: 30px;
    display: flex;
    align-items: center;
    gap: 22px;
    padding-left: 16px;
}

.tool {
    width: 104px;
    height: 108px;
    border-radius: 14px;
    display: flex;
    align-items: center;
    justify-content: center;
}

.tool.active {
    background: #3a3d45;
    box-shadow: 0 2px 6px rgba(0, 0, 0, .05);
}

.tool svg { width: 56px; height: 52px; }
.tool:nth-child(2) svg { width: 62px; height: 64px; }
.tool:nth-child(3) svg { width: 48px; height: 64px; }
.tool:nth-child(5) svg { width: 42px; height: 64px; }
.tool:nth-child(8) svg { width: 48px; height: 44px; }
.tool:nth-child(9) svg { width: 64px; height: 52px; }

.tools-sep {
    width: 1px;
    height: 42px;
    background: #6b6e74;
}

.ts-tile {
    width: 52px;
    height: 53px;
    border-radius: 2px;
    background: #0f93b5;
    display: flex;
    align-items: flex-end;
    justify-content: flex-end;
    padding: 0 1px 0 0;
    color: #3b4a5e;
    font-family: "Noto Sans", sans-serif;
    font-size: 30px;
    font-weight: 700;
    line-height: 36px;
}

.ic-panel { width: 60px; height: 52px; margin-left: 198px; }

.indicator-row {
    height: 27px;
    padding-top: 21px;
    padding-left: 391px;
}

.indicator-row i {
    display: block;
    width: 42px;
    height: 6px;
    border-radius: 3px;
    background: #f1f5f9;
}

.dock {
    display: flex;
    align-items: center;
    height: 77px;
    margin-top: 33px;
    padding-left: 153px;
    gap: 29px;
}

.ic-grid { width: 43px; height: 43px; margin-right: 12px; }

.app-icon {
    width: 77px;
    height: 77px;
    border-radius: 28px;
    overflow: hidden;
    flex: none;
}

.app-icon svg { width: 77px; height: 77px; }
.phone { background: linear-gradient(#1ed760, #0a9a4c); }
.light { background: #e7e7e7; }
.cam { background: #a8adb4; }
.folder { background: #e0e0e0; }
.spot { background: #000; }

.wells {
    background: #c01c25;
    color: #fff;
    font-family: "Liberation Serif", serif;
    font-size: 21px;
    line-height: 19px;
    display: flex;
    flex-direction: column;
    align-items: center;
    justify-content: center;
}

.dock-sep {
    width: 2px;
    height: 52px;
    background: #70737a;
    margin: 0 -4px 0 -4px;
}

.navs {
    display: flex;
    align-items: center;
    margin-left: 71px;
}

.nav-recents { width: 37px; height: 42px; margin-right: 124px; }
.nav-home { width: 43px; height: 42px; margin-right: 129px; }
.nav-back { width: 26px; height: 42px; }
```
